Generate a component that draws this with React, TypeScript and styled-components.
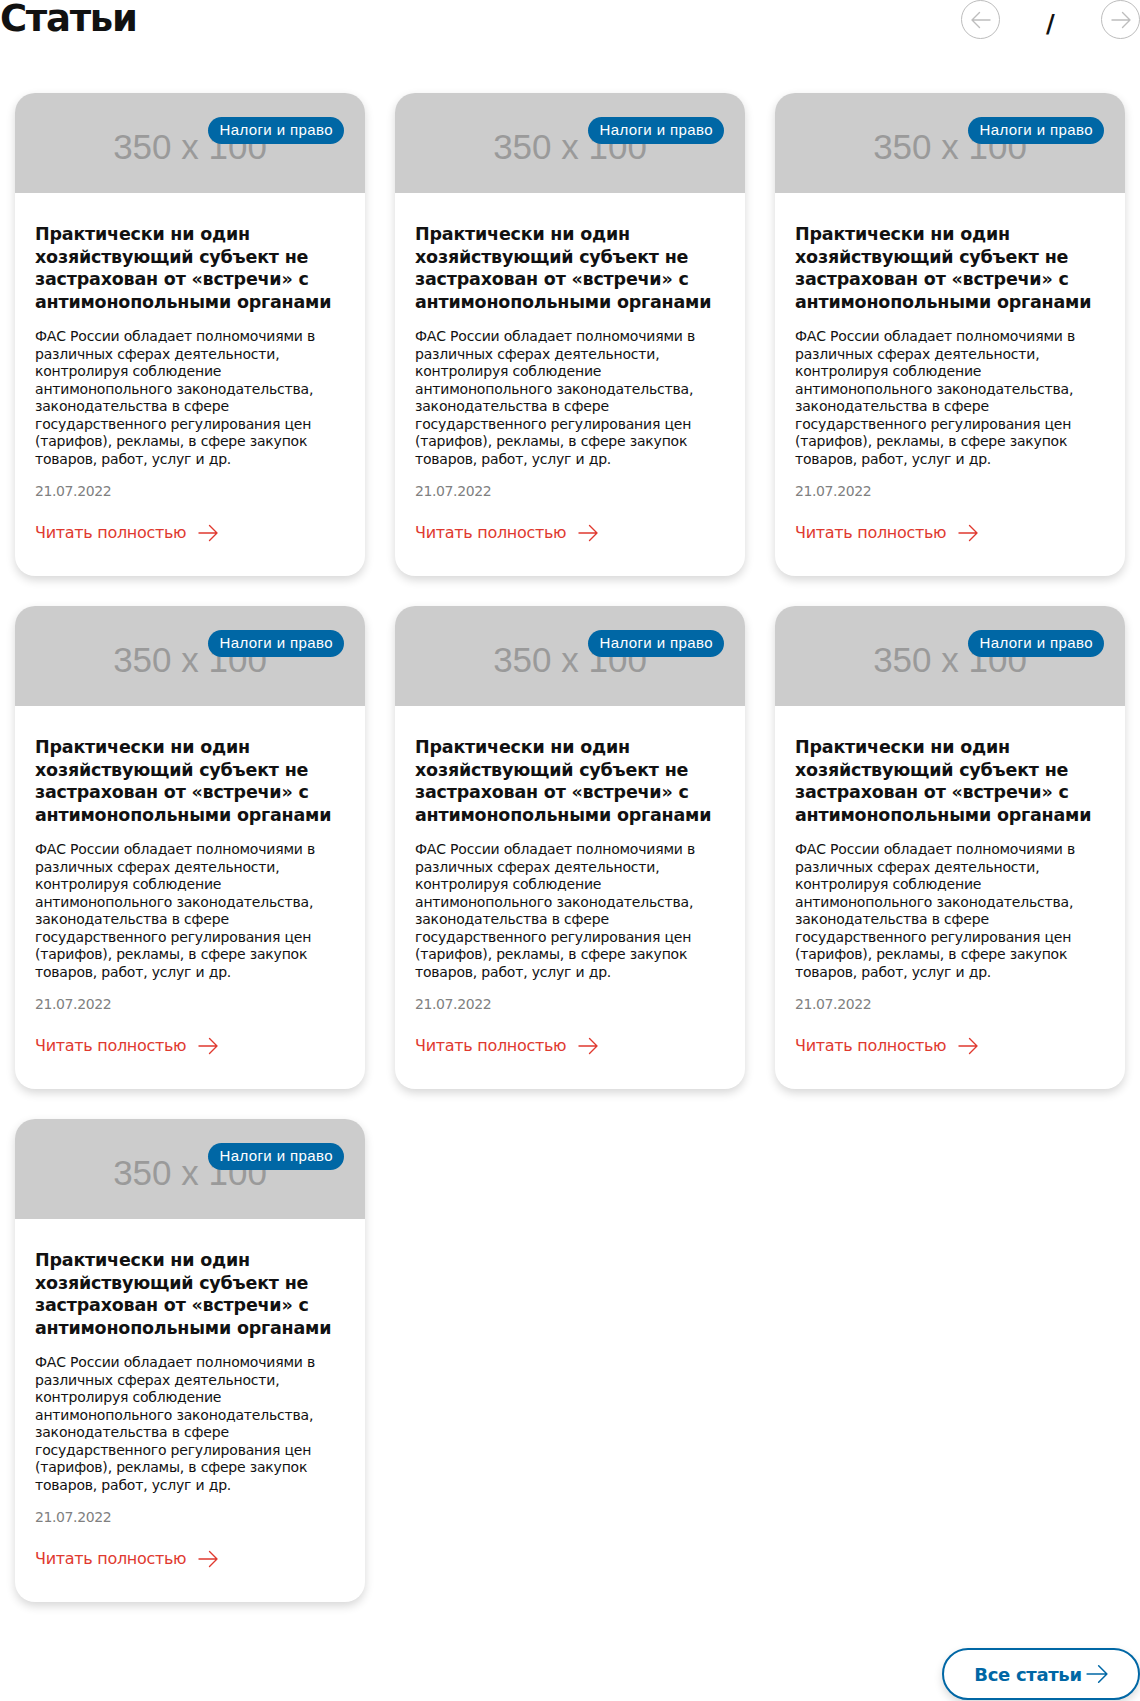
import styled, { createGlobalStyle } from "styled-components";

const colors = {
  blue: "#0067a5",
  red: "#e0392f",
  text: "#111111",
  muted: "#808080",
  placeholder: "#cccccc",
  circle: "#bdbdbd",
};

const GlobalStyle = createGlobalStyle`
  html, body {
    margin: 0;
    padding: 0;
    background: #fff;
  }
  body {
    font-family: "DejaVu Sans", "Noto Sans", sans-serif;
    color: ${colors.text};
  }
  * { box-sizing: border-box; }
`;

interface Article {
  id: number;
  tag: string;
  title: string;
  text: string;
  date: string;
}

const articles: Article[] = Array.from({ length: 7 }, (_, i) => ({
  id: i,
  tag: "Налоги и право",
  title:
    "Практически ни один хозяйствующий субъект не застрахован от «встречи» с антимонопольными органами",
  text:
    "ФАС России обладает полномочиями в различных сферах деятельности, контролируя соблюдение антимонопольного законодательства, законодательства в сфере государственного регулирования цен (тарифов), рекламы, в сфере закупок товаров, работ, услуг и др.",
  date: "21.07.2022",
}));

const ArrowIcon = ({ dir = "right", size = 20 }: { dir?: "left" | "right"; size?: number }) => (
  <svg
    width={size}
    height={size}
    viewBox="0 0 20 20"
    fill="none"
    stroke="currentColor"
    strokeWidth={1.4}
    strokeLinecap="round"
    strokeLinejoin="round"
    style={dir === "left" ? { transform: "scaleX(-1)" } : undefined}
  >
    <path d="M1 10h18M11.5 2.5L19 10l-7.5 7.5" />
  </svg>
);

const Page = styled.div`
  width: 1140px;
  padding-bottom: 2px;
`;

const Header = styled.div`
  display: flex;
  justify-content: space-between;
  align-items: flex-start;
  height: 40px;
`;

const Title = styled.h1`
  margin: 0;
  font-size: 37px;
  line-height: 38px;
  font-weight: 700;
  letter-spacing: -1.3px;
`;

const Pager = styled.div`
  display: flex;
  align-items: flex-start;
`;

const CircleButton = styled.button`
  width: 39px;
  height: 39px;
  border-radius: 50%;
  border: 1.5px solid ${colors.circle};
  background: #fff;
  color: ${colors.circle};
  display: flex;
  align-items: center;
  justify-content: center;
  padding: 0;
  cursor: pointer;
`;

const Counter = styled.span`
  width: 101px;
  text-align: center;
  font-size: 24px;
  font-weight: 700;
  line-height: 24px;
  margin-top: 12px;
`;

const Grid = styled.div`
  display: grid;
  grid-template-columns: repeat(3, 350px);
  column-gap: 30px;
  row-gap: 30px;
  padding: 0 15px;
  margin-top: 53px;
`;

const Card = styled.article`
  height: 483px;
  border-radius: 20px;
  background: #fff;
  box-shadow: 0 4px 10px rgba(0, 0, 0, 0.16);
  overflow: hidden;
  display: flex;
  flex-direction: column;
`;

const Cover = styled.div`
  position: relative;
  height: 100px;
  background: ${colors.placeholder};
  display: flex;
  align-items: center;
  justify-content: center;
  padding-top: 8px;
  font-family: "Liberation Sans", Arial, sans-serif;
  font-size: 35px;
  color: #9a9a9a;
`;

const Tag = styled.span`
  position: absolute;
  top: 24px;
  right: 21px;
  height: 27px;
  padding: 0 11px;
  border-radius: 14px;
  background: ${colors.blue};
  color: #fff;
  font-size: 15px;
  line-height: 26px;
  letter-spacing: 0.4px;
  white-space: nowrap;
`;

const Body = styled.div`
  padding: 30px 20px 0;
  display: flex;
  flex-direction: column;
`;

const CardTitle = styled.h3`
  margin: 0;
  font-size: 17.5px;
  line-height: 22.5px;
  font-weight: 700;
  letter-spacing: -0.2px;
`;

const CardText = styled.p`
  margin: 15px 0 0;
  font-size: 14px;
  line-height: 17.5px;
  letter-spacing: -0.2px;
`;

const DateText = styled.span`
  margin-top: 15px;
  font-size: 14px;
  line-height: 17px;
  color: ${colors.muted};
  letter-spacing: -0.4px;
`;

const ReadMore = styled.a`
  margin-top: 23px;
  display: inline-flex;
  align-items: center;
  gap: 12px;
  font-size: 16px;
  line-height: 20px;
  color: ${colors.red};
  text-decoration: none;
  letter-spacing: -0.3px;
`;

const Footer = styled.div`
  display: flex;
  justify-content: flex-end;
  margin-top: 46px;
`;

const AllButton = styled.a`
  width: 198px;
  height: 52px;
  border: 2px solid ${colors.blue};
  border-radius: 26px;
  background: #fff;
  box-shadow: 0 4px 8px rgba(0, 0, 0, 0.15);
  display: flex;
  align-items: center;
  justify-content: center;
  gap: 4px;
  color: ${colors.blue};
  font-size: 18px;
  font-weight: 700;
  text-decoration: none;
  letter-spacing: -0.3px;
`;

const ArticleCard = ({ article }: { article: Article }) => (
  <Card>
    <Cover>
      350 x 100
      <Tag>{article.tag}</Tag>
    </Cover>
    <Body>
      <CardTitle>{article.title}</CardTitle>
      <CardText>{article.text}</CardText>
      <DateText>{article.date}</DateText>
      <ReadMore href="#">
        Читать полностью
        <ArrowIcon size={20} />
      </ReadMore>
    </Body>
  </Card>
);

export default function App() {
  return (
    <Page>
      <GlobalStyle />
      <Header>
        <Title>Статьи</Title>
        <Pager>
          <CircleButton aria-label="Назад">
            <ArrowIcon dir="left" size={20} />
          </CircleButton>
          <Counter>/</Counter>
          <CircleButton aria-label="Вперёд">
            <ArrowIcon size={20} />
          </CircleButton>
        </Pager>
      </Header>
      <Grid>
        {articles.map((a) => (
          <ArticleCard key={a.id} article={a} />
        ))}
      </Grid>
      <Footer>
        <AllButton href="#">
          Все статьи
          <ArrowIcon size={22} />
        </AllButton>
      </Footer>
    </Page>
  );
}
